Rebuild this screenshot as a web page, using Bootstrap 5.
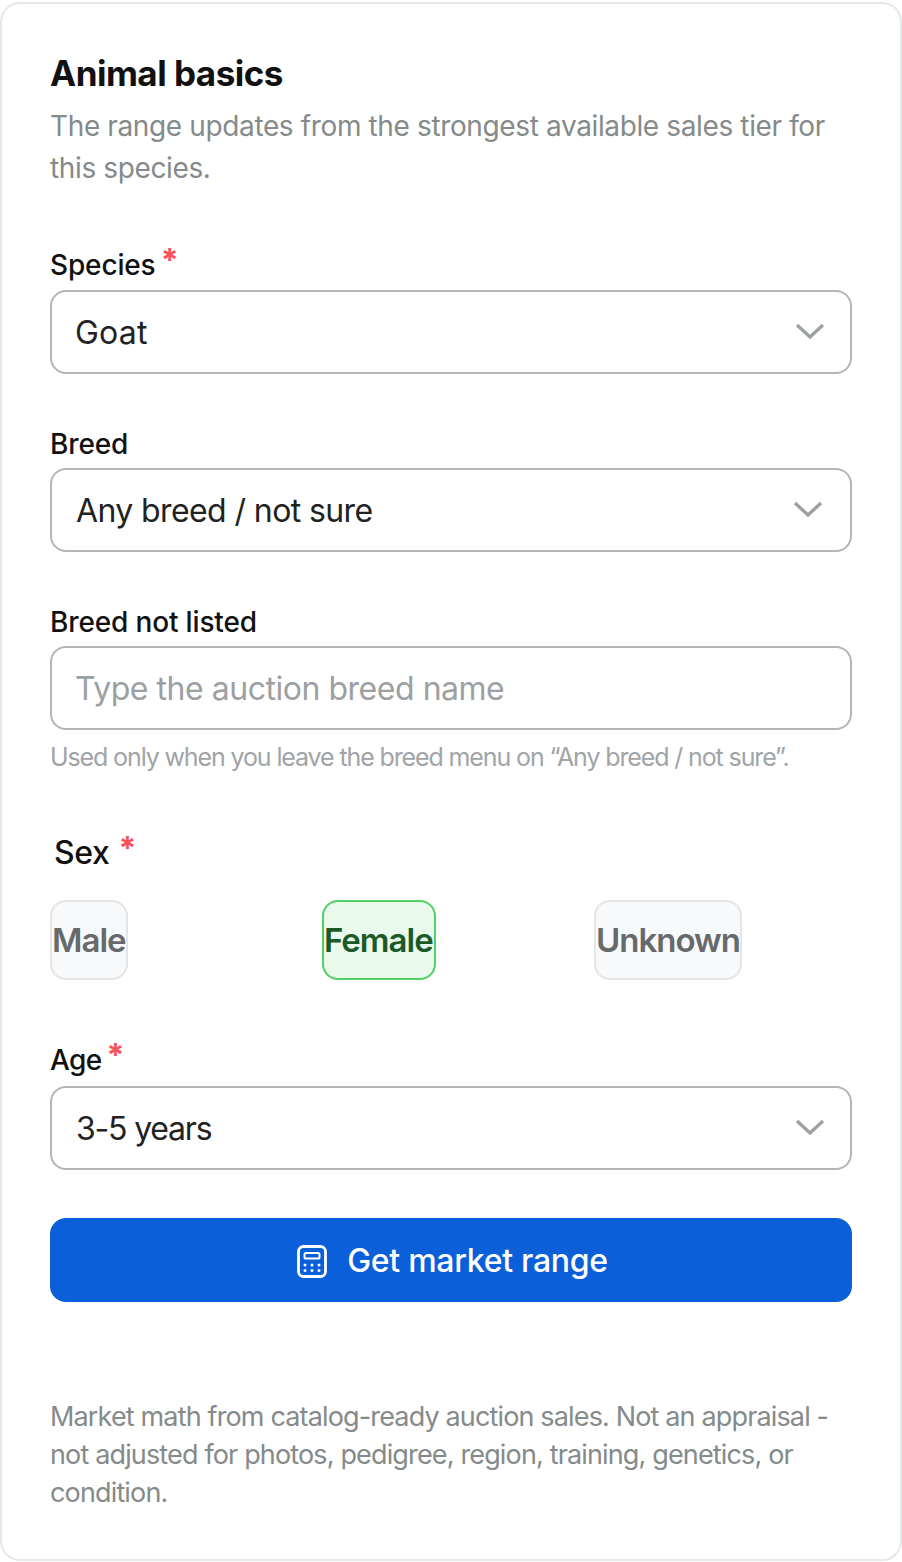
<!DOCTYPE html>
<html lang="en"><head><meta charset="utf-8"><title>Animal basics</title>
<link href="https://cdn.jsdelivr.net/npm/bootstrap@5.3.0/dist/css/bootstrap.min.css" rel="stylesheet">
<style>
html,body{height:100%;background:#fff}
body{font-family:Inter,"Liberation Sans",sans-serif;color:#111;padding:2px 0;margin:0}
.panel{height:1559px;width:902px;border:2px solid #e6e9e9;border-radius:20px;padding:47px 48px 0;background:#fff}
.panel h2{font-size:35px;font-weight:700;letter-spacing:-.5px;line-height:44px;margin:0;color:#111}
.intro{font-size:28px;line-height:42px;letter-spacing:-.37px;color:#858a8a;margin:10px 0 0}
.fld-label{display:block;font-size:28px;line-height:36px;font-weight:500;letter-spacing:-.15px;color:#111;margin:0 0 6px}
.fld-label.starred{margin-bottom:7px}
.fld-label.starred-age{margin-bottom:8px;letter-spacing:-.6px}
.req{color:#fb5058;position:relative;top:-3px;font-size:32px;font-weight:700;line-height:1;margin-left:-2px}
.sex-label .req{margin-left:1px;top:-4px}
.fld{margin-top:52px}
.fld-first{margin-top:58px}
.fld-after-sex{margin-top:62px}
.ctl.form-select,.ctl.form-control{height:84px;border:2px solid #b2b6b8;border-radius:16px;font-size:32px;letter-spacing:-.6px;color:#222;padding:2px 24px 0;box-shadow:none}
.ctl.form-control{letter-spacing:-.47px;padding:0 24px 0 23px}
.ctl.form-select{background-size:32px 32px;background-position:right 24px center;background-image:url("data:image/svg+xml,%3Csvg xmlns='http://www.w3.org/2000/svg' viewBox='0 0 32 32'%3E%3Cpath d='M3 9l13 12L29 9' fill='none' stroke='%239da1a4' stroke-width='3.4'/%3E%3C/svg%3E")}
.ctl.form-select.nudge{background-position:right 26px center}
.ctl.form-select.wide{letter-spacing:.2px;padding-left:23px}
.ctl.form-select.narrow{letter-spacing:-1.2px}
.ctl.form-control::placeholder{color:#9ca0a2;opacity:1}
.hint{font-size:25px;line-height:36px;letter-spacing:-1.12px;color:#a0a4a6;margin:9px 0 0}
.sex-block{margin-top:58px}
.sex-label{font-size:32px;line-height:40px;font-weight:500;letter-spacing:-.4px;margin:0 0 27px 4px;display:block}
.sex-row{display:grid;grid-template-columns:repeat(3,1fr);column-gap:14px;justify-items:start}
.sex-btn.btn{height:80px;padding:2px 0 0;border:2px solid #e3e5e7;border-radius:16px;background:#f8f9fb;color:#666a6a;font-size:33px;font-weight:600;letter-spacing:-1px;--bs-btn-active-bg:#f8f9fb}
.sex-btn.btn.sel{background:#e9faed;border-color:#52cf68;color:#1b5a28;padding:2px 1px 0 0}
.go.btn{height:84px;width:100%;margin-top:48px;border:0;border-radius:16px;background:#0b5fd9;color:#fff;font-size:32px;font-weight:500;letter-spacing:-.3px;display:flex;align-items:center;justify-content:center;gap:20px;padding:2px 0 0 3px}
.foot{font-size:27px;line-height:38px;letter-spacing:-.85px;color:#858a8a;margin:96px 0 0}
</style></head><body>
<div class="panel">
<h2>Animal basics</h2>
<p class="intro">The range updates from the strongest available sales tier for this species.</p>
<div class="fld-first"><label class="fld-label starred" for="a">Species <span class="req">*</span></label>
<select id="a" class="form-select ctl wide"><option>Goat</option></select></div>
<div class="fld"><label class="fld-label" for="b">Breed</label>
<select id="b" class="form-select ctl nudge"><option>Any breed / not sure</option></select></div>
<div class="fld"><label class="fld-label" for="c">Breed not listed</label>
<input id="c" class="form-control ctl" placeholder="Type the auction breed name">
<p class="hint">Used only when you leave the breed menu on “Any breed / not sure”.</p></div>
<div class="sex-block"><span class="sex-label">Sex <span class="req">*</span></span>
<div class="sex-row"><button class="btn sex-btn">Male</button><button class="btn sex-btn sel">Female</button><button class="btn sex-btn">Unknown</button></div></div>
<div class="fld-after-sex"><label class="fld-label starred-age" for="d">Age <span class="req">*</span></label>
<select id="d" class="form-select ctl narrow"><option>3-5 years</option></select></div>
<button class="btn go"><svg width="30" height="33" viewBox="0 0 30 33" fill="none" aria-hidden="true"><rect x="1.500" y="1.500" width="27" height="30" rx="5" stroke="#fff" stroke-width="2.8"/><rect x="7.500" y="8" width="15" height="5.500" rx="1.600" stroke="#fff" stroke-width="2"/><g fill="#fff"><circle cx="8" cy="20" r="1.500"/><circle cx="15" cy="20" r="1.500"/><circle cx="22" cy="20" r="1.500"/><circle cx="8" cy="25.500" r="1.500"/><circle cx="15" cy="25.500" r="1.500"/><circle cx="22" cy="25.500" r="1.500"/></g></svg>Get market range</button>
<p class="foot">Market math from catalog-ready auction sales. Not an appraisal - not adjusted for photos, pedigree, region, training, genetics, or condition.</p>
</div>
</body></html>
